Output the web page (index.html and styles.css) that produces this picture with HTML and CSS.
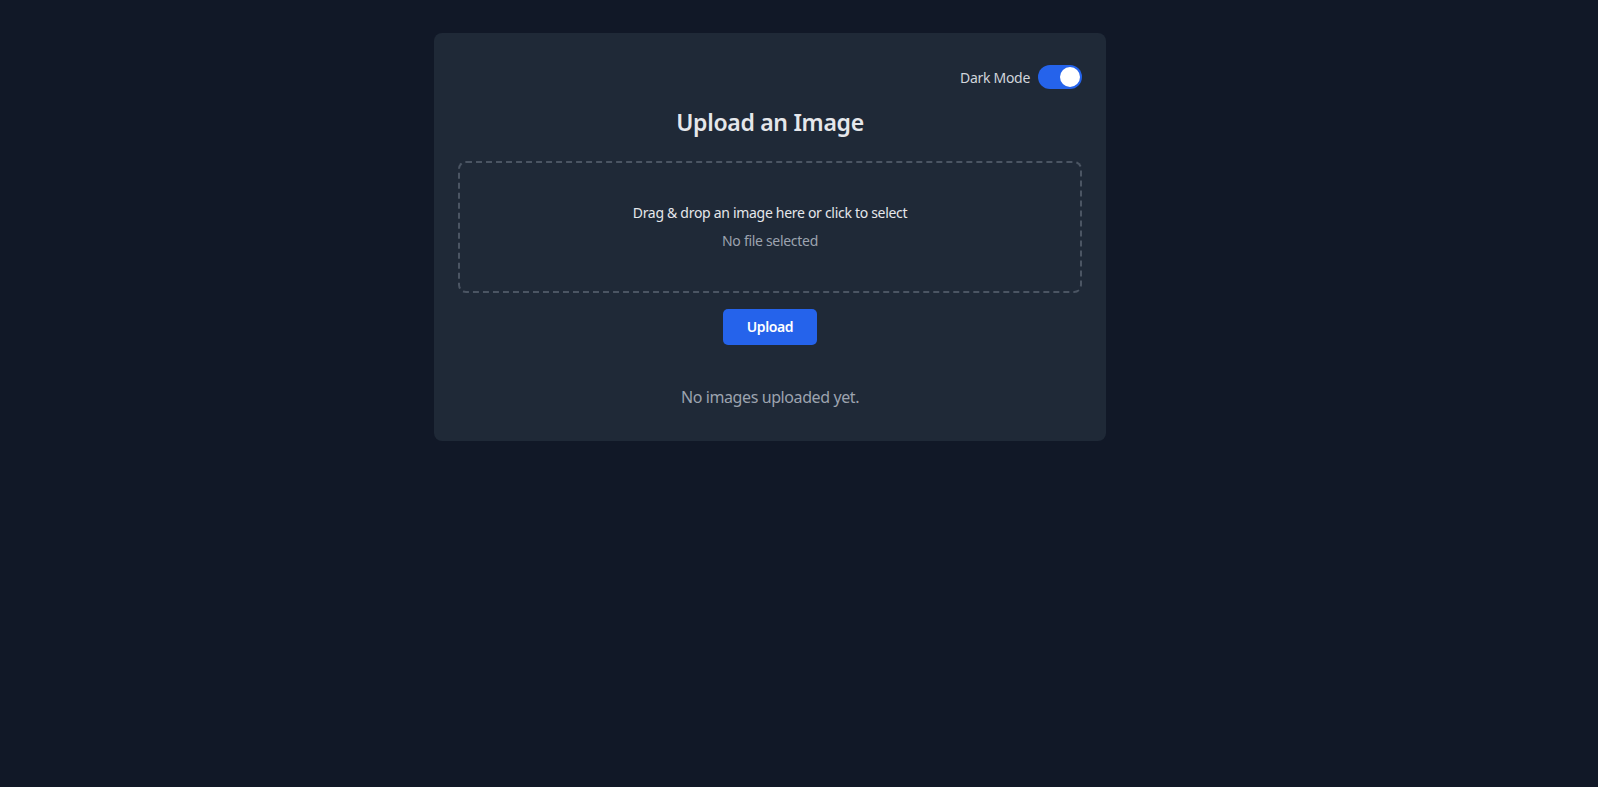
FILE: index.html
```html
<!DOCTYPE html>
<html lang="en">
<head>
<meta charset="utf-8">
<title>Upload an Image</title>
<link rel="stylesheet" href="styles.css">
</head>
<body>
<main class="card">
  <div class="toggle-row">
    <span class="toggle-label">Dark Mode</span>
    <span class="toggle"><span class="knob"></span></span>
  </div>
  <h1 class="title">Upload an Image</h1>
  <div class="dropzone">
    <p class="drop-text">Drag &amp; drop an image here or click to select</p>
    <p class="file-text">No file selected</p>
  </div>
  <div class="actions">
    <button class="upload-btn" type="button">Upload</button>
  </div>
  <p class="empty">No images uploaded yet.</p>
</main>
</body>
</html>
```
FILE: styles.css
```css
* { box-sizing: border-box; }
html, body { margin: 0; padding: 0; }
body {
  background: #111827;
  font-family: "Noto Sans", "Open Sans", sans-serif;
  color: #e5e7eb;
  min-height: 100vh;
  padding: 33px 58px 0 0;
}
.card {
  width: 672px;
  margin: 0 auto;
  background: #1f2937;
  border-radius: 8px;
  padding: 32px 24px;
}
.toggle-row {
  display: flex;
  justify-content: flex-end;
  align-items: center;
  gap: 8px;
  height: 24px;
}
.toggle-label {
  font-size: 14px;
  letter-spacing: -0.3px;
  color: #d1d5db;
}
.toggle {
  width: 44px;
  height: 24px;
  border-radius: 12px;
  background: #2563eb;
  display: flex;
  align-items: center;
  justify-content: flex-end;
  padding: 2px;
}
.knob {
  width: 20px;
  height: 20px;
  border-radius: 50%;
  background: #fff;
}
.title {
  margin: 17px 0 23px;
  font-size: 23px;
  letter-spacing: -0.3px;
  line-height: 32px;
  font-weight: 600;
  text-align: center;
  color: #e5e7eb;
}
.dropzone {
  border: 2px dashed #4b5563;
  border-radius: 8px;
  padding: 40px;
  text-align: center;
}
.drop-text {
  margin: 0;
  font-size: 14px;
  letter-spacing: -0.3px;
  line-height: 20px;
  color: #e5e7eb;
}
.file-text {
  margin: 8px 0 0;
  font-size: 14px;
  letter-spacing: -0.3px;
  line-height: 20px;
  color: #9ca3af;
}
.actions {
  display: flex;
  justify-content: center;
  margin-top: 16px;
}
.upload-btn {
  font-family: inherit;
  background: #2563eb;
  color: #fff;
  border: none;
  border-radius: 5px;
  padding: 8px 24px;
  font-size: 14px;
  letter-spacing: -0.4px;
  line-height: 20px;
  font-weight: 600;
}
.empty {
  margin: 40px 0 0;
  text-align: center;
  font-size: 16px;
  letter-spacing: -0.4px;
  line-height: 24px;
  color: #9ca3af;
}
```
